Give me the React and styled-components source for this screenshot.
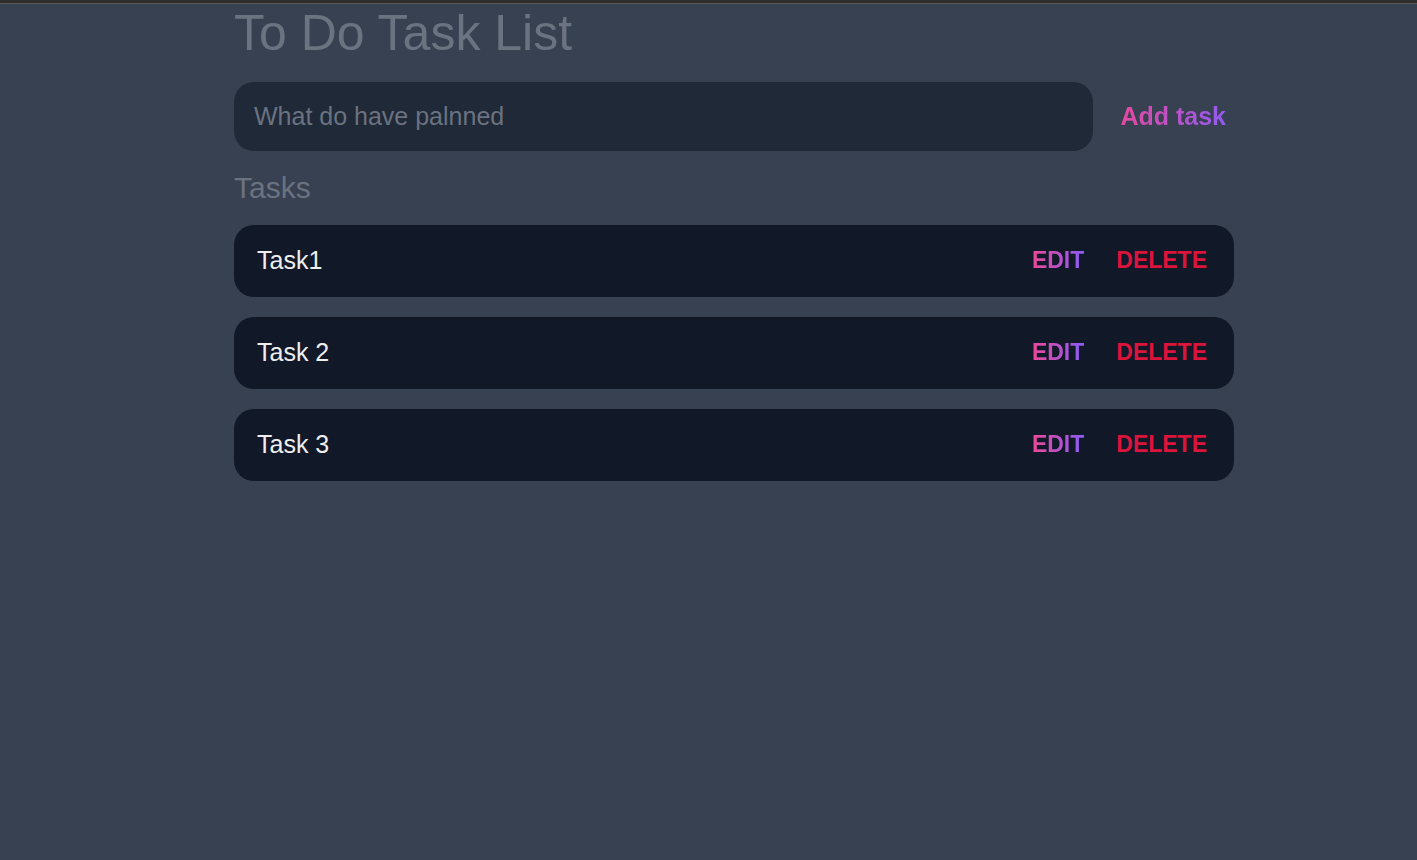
import React, { useState } from "react";
import styled, { createGlobalStyle } from "styled-components";

const GlobalStyle = createGlobalStyle`
  *, *::before, *::after {
    box-sizing: border-box;
  }
  body {
    margin: 0;
    background: #374151;
    color: #eeeeee;
    font-family: Arial, "Liberation Sans", sans-serif;
  }
  button, input {
    font-family: inherit;
  }
`;

const Page = styled.div`
  min-height: 100vh;
  padding-left: 51px;
  border-top: 3px solid #2d2d2d;
  background: linear-gradient(#585752, #585752) top / 100% 1px no-repeat padding-box, #374151;
`;

const Container = styled.main`
  display: flex;
  flex-direction: column;
  max-width: 1000px;
  margin: 0 auto;
`;

const Title = styled.h1`
  margin: 0 0 18px;
  color: #6b7280;
  font-size: 50px;
  font-weight: 400;
  line-height: 61px;
`;

const TaskForm = styled.form`
  display: flex;
`;

const TaskInput = styled.input`
  flex: 1;
  min-width: 0;
  padding: 20px;
  border: none;
  border-radius: 20px;
  outline: none;
  background: #1f2937;
  color: #eeeeee;
  font-size: 25px;
  line-height: 29px;

  &::placeholder {
    color: #6b7280;
    opacity: 1;
  }
`;

const TextButton = styled.button`
  padding: 0;
  border: none;
  background: none;
  color: crimson;
  font-size: 23px;
  font-weight: 700;
  line-height: 28px;
  cursor: pointer;
`;

const GradientButton = styled(TextButton)`
  background: linear-gradient(to right, #ec4899, #8b5cf6);
  background-clip: text;
  -webkit-background-clip: text;
  color: transparent;
`;

const AddButton = styled(GradientButton)`
  margin-left: 19px;
  padding: 0 8px 2px;
  font-size: 25px;
`;

const SectionTitle = styled.h2`
  margin: 20px 0;
  color: #6b7280;
  font-size: 30px;
  font-weight: 400;
  line-height: 34px;
`;

const TaskList = styled.ul`
  display: flex;
  flex-direction: column;
  gap: 20px;
  margin: 0;
  padding: 0;
  list-style: none;
`;

const TaskRow = styled.li`
  display: flex;
  align-items: center;
  gap: 16px;
  padding: 20px 27px 22px 23px;
  border-radius: 20px;
  background: #111827;
`;

const TaskText = styled.span`
  flex: 1;
  color: #eeeeee;
  font-size: 25px;
  line-height: 30px;
`;

const Actions = styled.div`
  display: flex;
  gap: 32px;
`;

export default function App() {
  const [tasks, setTasks] = useState(["Task1", "Task 2", "Task 3"]);
  const [draft, setDraft] = useState("");

  const addTask = (event) => {
    event.preventDefault();
    if (!draft.trim()) return;
    setTasks([...tasks, draft.trim()]);
    setDraft("");
  };

  const removeTask = (index) => setTasks(tasks.filter((_, i) => i !== index));

  const editTask = (index) => {
    setDraft(tasks[index]);
    removeTask(index);
  };

  return (
    <Page>
      <GlobalStyle />
      <Container>
        <Title>To Do Task List</Title>
        <TaskForm onSubmit={addTask}>
          <TaskInput
            type="text"
            aria-label="New task"
            placeholder="What do have palnned"
            value={draft}
            onChange={(event) => setDraft(event.target.value)}
          />
          <AddButton type="submit">Add task</AddButton>
        </TaskForm>
        <SectionTitle>Tasks</SectionTitle>
        <TaskList>
          {tasks.map((task, index) => (
            <TaskRow key={index}>
              <TaskText>{task}</TaskText>
              <Actions>
                <GradientButton type="button" onClick={() => editTask(index)}>EDIT</GradientButton>
                <TextButton type="button" onClick={() => removeTask(index)}>DELETE</TextButton>
              </Actions>
            </TaskRow>
          ))}
        </TaskList>
      </Container>
    </Page>
  );
}
